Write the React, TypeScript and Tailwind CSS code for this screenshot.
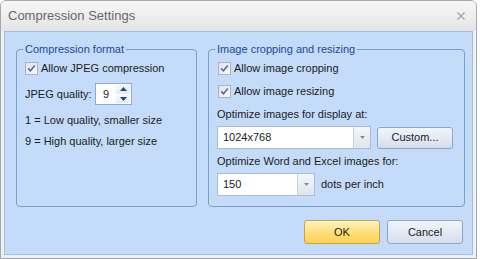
import React from "react";

const font = { fontFamily: '"Liberation Sans", Arial, sans-serif' };

const Check = () => (
  <svg width="13" height="13" viewBox="0 0 13 13" className="shrink-0">
    <defs>
      <linearGradient id="cb" x1="0" y1="0" x2="1" y2="1">
        <stop offset="0" stopColor="#dfe3ea" />
        <stop offset="1" stopColor="#f7f8fa" />
      </linearGradient>
    </defs>
    <rect x="0.5" y="0.5" width="12" height="12" fill="url(#cb)" stroke="#aab3c1" />
    <path d="M3.2 6.4 L5.4 8.8 L9.8 3.4" fill="none" stroke="#5a6c9a" strokeWidth="1.6" />
  </svg>
);

const Arrow = ({ up = false, color = "#1f4a8f" }: { up?: boolean; color?: string }) => (
  <svg width="7" height="4" viewBox="0 0 7 4">
    <path d={up ? "M0 4 L3.5 0 L7 4 Z" : "M0 0 L7 0 L3.5 4 Z"} fill={color} />
  </svg>
);

const Combo = ({ value, width }: { value: string; width: string }) => (
  <div className={`${width} h-[23px] flex border border-[#a9bcd6] bg-white`}>
    <span className="flex-1 pl-[5px] flex items-center">{value}</span>
    <div className="w-[17px] flex items-center justify-center bg-gradient-to-b from-[#f4f6f9] to-[#dfe5ee] border-l border-[#c9d3e0]">
      <svg width="5" height="3" viewBox="0 0 5 3">
        <path d="M0 0 L5 0 L2.5 3 Z" fill="#7d8ba0" />
      </svg>
    </div>
  </div>
);

const Row = ({ label, h }: { label: string; h: string }) => (
  <div className={`${h} flex items-center gap-[3px]`}>
    <Check />
    <span>{label}</span>
  </div>
);

export default function App() {
  return (
    <div className="w-[480px] h-[259px] bg-white text-[11px] text-[#1c1c1c]" style={font}>
      <div className="w-[477px] h-[259px] flex flex-col rounded-t-[6px] border border-[#a2a8b0] bg-[#edf0f4] overflow-hidden">
        <div className="h-[30px] shrink-0 flex items-center justify-between px-[7px] bg-gradient-to-b from-[#f7f7f7] to-[#e4e4e4]">
          <span className="text-[13px] text-[#686868]">Compression Settings</span>
          <svg width="8" height="8" viewBox="0 0 8 8" className="mr-[4px]">
            <path d="M0.5 0.5 L7.5 7.5 M7.5 0.5 L0.5 7.5" stroke="#a6a6a6" strokeWidth="1.3" />
          </svg>
        </div>

        <div className="flex-1 mx-[3px] mb-[3px] border border-[#a6bcdb] bg-[#c4dbf9] flex flex-col pt-[10px]">
          <div className="flex gap-[11px] pl-[11px]">
            <fieldset className="w-[181px] h-[165px] border border-[#7b9dcc] rounded-[4px] pl-[8px] pr-[8px]">
              <legend className="-ml-[2px] px-[2px] leading-[14px] text-[#1d4a94]">Compression format</legend>
              <Row label="Allow JPEG compression" h="h-[24px]" />
              <div className="mt-[3px] h-[22px] flex items-center">
                <span className="w-[70px]">JPEG quality:</span>
                <div className="w-[37px] h-[22px] flex border border-[#8eabd6] bg-white">
                  <span className="flex-1 pl-[7px] flex items-center">9</span>
                  <div className="w-[16px] flex flex-col p-[1px] gap-[1px]">
                    <div className="flex-1 flex items-center justify-center bg-gradient-to-b from-[#f5f8fc] to-[#e2eaf5]">
                      <Arrow up />
                    </div>
                    <div className="flex-1 flex items-center justify-center bg-gradient-to-b from-[#f5f8fc] to-[#e2eaf5]">
                      <Arrow />
                    </div>
                  </div>
                </div>
              </div>
              <div className="mt-[4px] h-[22px] flex items-center">1 = Low quality, smaller size</div>
              <div className="h-[21px] flex items-center">9 = High quality, larger size</div>
            </fieldset>

            <fieldset className="w-[257px] h-[165px] border border-[#7b9dcc] rounded-[4px] pl-[8px] pr-[8px]">
              <legend className="-ml-[2px] px-[2px] leading-[14px] text-[#1d4a94]">Image cropping and resizing</legend>
              <div className="pl-[1px]">
                <Row label="Allow image cropping" h="h-[24px]" />
                <Row label="Allow image resizing" h="h-[23px]" />
              </div>
              <div className="h-[23px] flex items-center">Optimize images for display at:</div>
              <div className="flex items-center gap-[6px]">
                <Combo value="1024x768" width="w-[154px]" />
                <button className="w-[76px] h-[22px] rounded-[3px] border border-[#8fa6c6] bg-gradient-to-b from-[#f1f5fa] via-[#e3eaf3] to-[#d3deec]">
                  Custom...
                </button>
              </div>
              <div className="h-[24px] flex items-center">Optimize Word and Excel images for:</div>
              <div className="flex items-center gap-[6px]">
                <Combo value="150" width="w-[98px]" />
                <span>dots per inch</span>
              </div>
            </fieldset>
          </div>

          <div className="mt-[13px] flex justify-end gap-[7px] pr-[9px]">
            <button className="w-[76px] h-[24px] rounded-[3px] border border-[#c5a24e] bg-gradient-to-b from-[#fff3bf] via-[#ffe07c] to-[#ffd24e]">
              OK
            </button>
            <button className="w-[76px] h-[24px] rounded-[3px] border border-[#8fa6c6] bg-gradient-to-b from-[#f1f5fa] via-[#e3eaf3] to-[#d3deec]">
              Cancel
            </button>
          </div>
        </div>
      </div>
    </div>
  );
}
